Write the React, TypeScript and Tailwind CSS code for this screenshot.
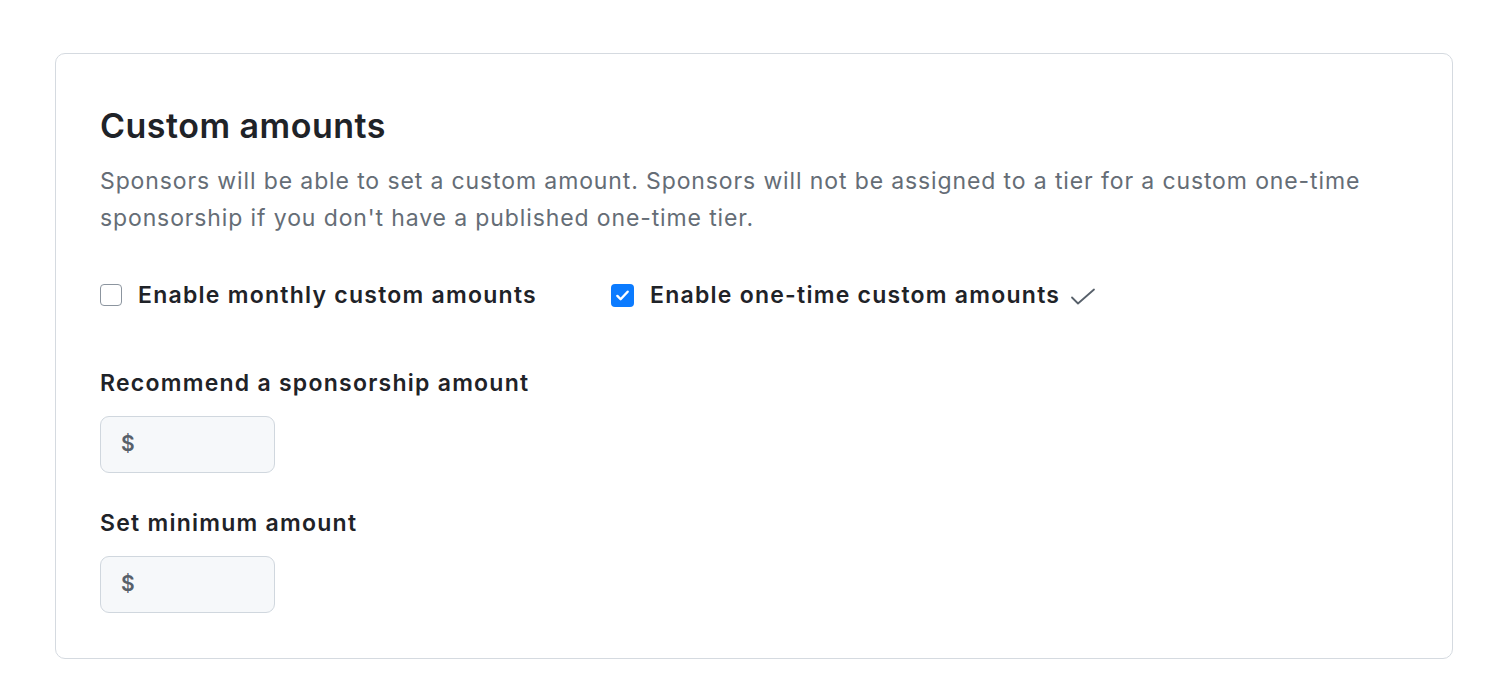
import React from 'react';

const font = { fontFamily: 'Inter, "Liberation Sans", sans-serif' };

interface CheckProps {
  label: string;
  checked?: boolean;
  saved?: boolean;
}

const CheckOption: React.FC<CheckProps> = ({ label, checked, saved }) => {
  return (
    <label className="flex items-center">
      {checked ? (
        <span className="w-[23px] h-[23px] rounded-[4px] bg-[#0b7bff] flex items-center justify-center">
          <svg width="15" height="15" viewBox="0 0 16 16" fill="none">
            <path d="M2.5 8.5l3.5 3.5 7.5-8" stroke="white" strokeWidth="2.6" strokeLinecap="round" strokeLinejoin="round" />
          </svg>
        </span>
      ) : (
        <span className="w-[22px] h-[22px] rounded-[4px] border-[1.5px] border-[#8c959f] bg-white" />
      )}
      <span className="ml-[16px] text-[23px] font-semibold text-[#1f2328] tracking-[1.25px]">{label}</span>
      {saved && (
        <svg className="ml-[10px] mt-[3px]" width="26" height="20" viewBox="0 0 26 20" fill="none">
          <path d="M2 10.5l6 6 16-14" stroke="#57606a" strokeWidth="1.8" strokeLinecap="round" strokeLinejoin="round" />
        </svg>
      )}
    </label>
  );
};

const AmountField: React.FC<{ label: string }> = ({ label }) => {
  return (
    <div>
      <div className="text-[23px] font-semibold text-[#1f2328] leading-[30px] tracking-[1.25px]">{label}</div>
      <div className="mt-[18px] w-[175px] h-[57px] rounded-[9px] border border-[#d0d7de] bg-[#f6f8fa] flex items-center pl-[20px]">
        <span className="text-[21px] font-semibold text-[#57606a]">$</span>
      </div>
    </div>
  );
};

export default function App() {
  return (
    <div className="min-h-[697px] bg-white pt-[53px] pl-[55px]" style={font}>
      <div className="w-[1398px] h-[606px] rounded-[10px] border-[1.5px] border-[#d5dae0] pl-[44px] pt-[51px]">
        <h2 className="text-[34px] font-semibold text-[#1f2328] leading-[42px] tracking-[0.5px]">Custom amounts</h2>
        <p className="mt-[16px] text-[23px] leading-[37px] text-[#656d76] w-[1300px] tracking-[0.88px]">
          Sponsors will be able to set a custom amount. Sponsors will not be assigned to a tier for a custom one-time
          sponsorship if you don't have a published one-time tier.
        </p>
        <div className="mt-[41px] flex items-center gap-[74px]">
          <CheckOption label="Enable monthly custom amounts" />
          <CheckOption label="Enable one-time custom amounts" checked saved />
        </div>
        <div className="mt-[55px] flex flex-col gap-[35px]">
          <AmountField label="Recommend a sponsorship amount" />
          <AmountField label="Set minimum amount" />
        </div>
      </div>
    </div>
  );
}
